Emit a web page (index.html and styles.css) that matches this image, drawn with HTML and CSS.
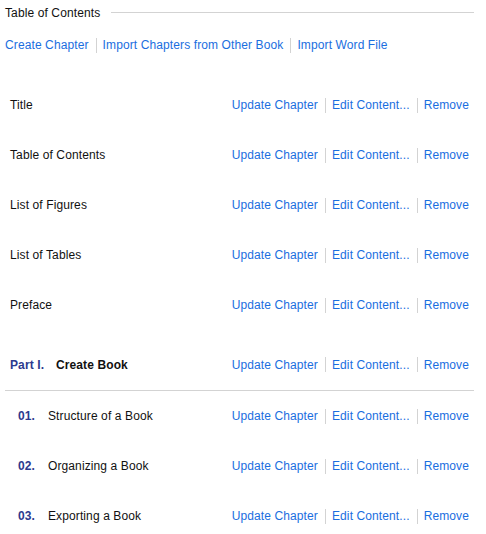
FILE: index.html
```html
<!DOCTYPE html>
<html>
<head>
<meta charset="utf-8">
<link rel="stylesheet" href="styles.css">
</head>
<body>
<div class="toc">
  <div class="header">
    <span class="header-title">Table of Contents</span>
    <span class="rule"></span>
  </div>
  <div class="toolbar">
    <a class="link">Create Chapter</a><span class="sep"></span><a class="link">Import Chapters from Other Book</a><span class="sep"></span><a class="link">Import Word File</a>
  </div>
  <div class="list">
    <div class="row">
      <span class="name">Title</span>
      <div class="actions"><a class="link">Update Chapter</a><span class="sep"></span><a class="link">Edit Content...</a><span class="sep"></span><a class="link">Remove</a></div>
    </div>
    <div class="row">
      <span class="name">Table of Contents</span>
      <div class="actions"><a class="link">Update Chapter</a><span class="sep"></span><a class="link">Edit Content...</a><span class="sep"></span><a class="link">Remove</a></div>
    </div>
    <div class="row">
      <span class="name">List of Figures</span>
      <div class="actions"><a class="link">Update Chapter</a><span class="sep"></span><a class="link">Edit Content...</a><span class="sep"></span><a class="link">Remove</a></div>
    </div>
    <div class="row">
      <span class="name">List of Tables</span>
      <div class="actions"><a class="link">Update Chapter</a><span class="sep"></span><a class="link">Edit Content...</a><span class="sep"></span><a class="link">Remove</a></div>
    </div>
    <div class="row">
      <span class="name">Preface</span>
      <div class="actions"><a class="link">Update Chapter</a><span class="sep"></span><a class="link">Edit Content...</a><span class="sep"></span><a class="link">Remove</a></div>
    </div>
    <div class="row part">
      <span class="name"><span class="num part-num">Part I.</span><span class="part-title">Create Book</span></span>
      <div class="actions"><a class="link">Update Chapter</a><span class="sep"></span><a class="link">Edit Content...</a><span class="sep"></span><a class="link">Remove</a></div>
    </div>
    <div class="row chapter">
      <span class="name"><span class="num ch-num">01.</span>Structure of a Book</span>
      <div class="actions"><a class="link">Update Chapter</a><span class="sep"></span><a class="link">Edit Content...</a><span class="sep"></span><a class="link">Remove</a></div>
    </div>
    <div class="row chapter">
      <span class="name"><span class="num ch-num">02.</span>Organizing a Book</span>
      <div class="actions"><a class="link">Update Chapter</a><span class="sep"></span><a class="link">Edit Content...</a><span class="sep"></span><a class="link">Remove</a></div>
    </div>
    <div class="row chapter">
      <span class="name"><span class="num ch-num">03.</span>Exporting a Book</span>
      <div class="actions"><a class="link">Update Chapter</a><span class="sep"></span><a class="link">Edit Content...</a><span class="sep"></span><a class="link">Remove</a></div>
    </div>
  </div>
</div>
</body>
</html>
```

FILE: styles.css
```css
* {
  box-sizing: border-box;
}

html, body {
  margin: 0;
  padding: 0;
  background: #ffffff;
}

body {
  font-family: "Liberation Sans", Arial, sans-serif;
  font-size: 12px;
  line-height: 14px;
  letter-spacing: 0.11px;
  color: #111111;
  width: 486px;
  height: 534px;
  overflow: hidden;
}

.toc {
  padding: 0 12px 0 5px;
}

.header {
  display: flex;
  align-items: center;
  height: 26px;
}

.header-title {
  color: #111111;
}

.rule {
  flex: 1;
  height: 1px;
  background: #d3d3d3;
  margin-left: 11px;
  margin-top: -2px;
}

.toolbar {
  display: flex;
  align-items: center;
  margin-top: 12px;
  height: 14px;
}

.link {
  color: #1a6ee0;
  text-decoration: none;
  white-space: nowrap;
  cursor: pointer;
}

.sep {
  display: inline-block;
  width: 1px;
  height: 15px;
  background: #d3d3d3;
  margin: 0 6px 0 7px;
}

.list {
  margin-top: 28px;
}

.row {
  display: flex;
  align-items: center;
  justify-content: space-between;
  height: 50px;
  padding: 0 5px 0 5px;
}

.actions {
  display: flex;
  align-items: center;
}

.name {
  display: flex;
  align-items: center;
  white-space: nowrap;
}

.part {
  height: 61px;
  padding-top: 9px;
  border-bottom: 1px solid #d3d3d3;
}

.num {
  font-weight: bold;
  color: #2c3a8e;
}

.part-num {
  width: 46px;
}

.part-title {
  font-weight: bold;
  color: #111111;
}

.chapter {
  padding-left: 13px;
}

.ch-num {
  width: 30px;
}
```
